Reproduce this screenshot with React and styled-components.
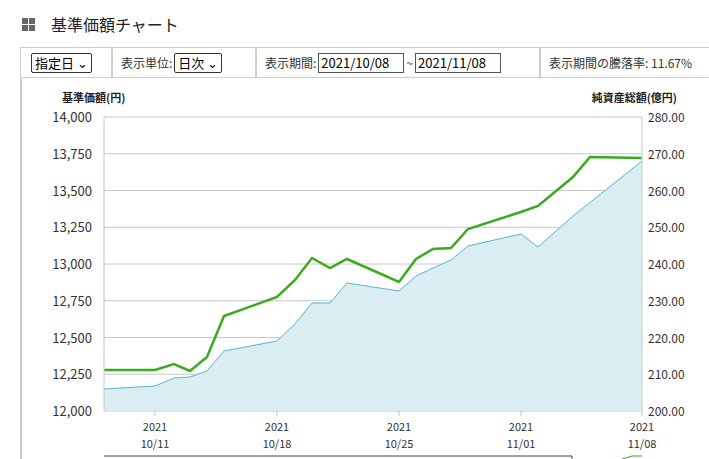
import React from 'react'
import styled, { createGlobalStyle } from 'styled-components'

const Global = createGlobalStyle`
  body { margin: 0; background: #fff; font-family: "Noto Sans CJK JP", "Noto Sans", sans-serif; color: #222; overflow: hidden; }
`

const green = [[104,370],[155,370],[174,364],[190,371],[207,357],[224,316],[277,297],[295,280],[312,258],[330,268],[347,259],[399,282],[416,259],[433,249],[451,248],[468,229],[521,212],[538,206],[573,177],[590,157],[642,158]]
const blue = [[104,389],[155,386],[174,378],[190,377],[207,371],[224,351],[277,341],[295,324],[312,303],[330,303],[347,283],[399,291],[416,276],[433,268],[451,260],[468,246],[521,234],[538,247],[573,216],[642,161]]
const leftTicks = ['14,000','13,750','13,500','13,250','13,000','12,750','12,500','12,250','12,000']
const rightTicks = ['280.00','270.00','260.00','250.00','240.00','230.00','220.00','210.00','200.00']
const dates = [[155,'10/11'],[277,'10/18'],[399,'10/25'],[521,'11/01'],[642,'11/08']]

const Title = () => (
  <Head>
    <svg width="13" height="13" viewBox="0 0 13 13">
      <rect x="0" y="0" width="6" height="6" fill="#666" />
      <rect x="7" y="0" width="6" height="6" fill="#666" />
      <rect x="0" y="7" width="6" height="6" fill="#666" />
      <rect x="7" y="7" width="6" height="6" fill="#666" />
    </svg>
    <span>基準価額チャート</span>
  </Head>
)

const Chart = () => {
  const top = 117, bottom = 411, step = (bottom - top) / 8
  const pts = (a) => a.map(p => `${p[0]},${p[1] - 78}`).join(' ')
  return (
    <svg width="709" height="381" viewBox="0 0 709 381">
      <g fontFamily='"Noto Sans CJK JP", sans-serif' fontSize="12" fill="#222">
        <text x="62" y="24" fontWeight="bold" fontSize="11">基準価額(円)</text>
        <text x="677" y="24" fontWeight="bold" fontSize="11" textAnchor="end">純資産総額(億円)</text>
      </g>
      {leftTicks.map((_, i) => (
        <line key={i} x1="104" x2="642" y1={top - 78 + i * step} y2={top - 78 + i * step} stroke={i === 8 ? '#b8c8d8' : '#c8c8c8'} />
      ))}
      <polygon points={`104,333 ${pts(blue)} 642,333`} fill="#d9edf3" />
      <polyline points={pts(blue)} fill="none" stroke="#5ab4cc" strokeWidth="1" />
      <polyline points={pts(green)} fill="none" stroke="#3aaa1e" strokeWidth="2.5" />
      <line x1="104" x2="104" y1={top - 78} y2="333" stroke="#c8c8c8" />
      <line x1="642" x2="642" y1={top - 78} y2="333" stroke="#c8c8c8" />
      <g fontFamily='"Noto Sans CJK JP", sans-serif' fontSize="13" fill="#333">
        {leftTicks.map((t, i) => (
          <text key={t} x="92" y={top - 78 + i * step + 5} textAnchor="end">{t}</text>
        ))}
        {rightTicks.map((t, i) => (
          <text key={t} x="648" y={top - 78 + i * step + 5} fontSize="12">{t}</text>
        ))}
        {dates.map(([x, d]) => (
          <g key={d}>
            <line x1={x} x2={x} y1="333" y2="338" stroke="#b8c8d8" />
            <text x={x} y="353" textAnchor="middle" fontSize="11">2021</text>
            <text x={x} y="370" textAnchor="middle" fontSize="11">{d}</text>
          </g>
        ))}
      </g>
      <path d="M104 378 H572 V381" fill="none" stroke="#444" />
      <path d="M622 381 L632 378 H642" fill="none" stroke="#3aaa1e" />
    </svg>
  )
}

export default function App() {
  return (
    <>
      <Global />
      <Title />
      <Toolbar>
        <Cell w={92}><Select>指定日 ⌄</Select></Cell>
        <Cell w={144}>表示単位: <Select>日次 ⌄</Select></Cell>
        <Cell w={284}>表示期間: <DateBox>2021/10/08</DateBox>~<DateBox>2021/11/08</DateBox></Cell>
        <Cell w={180}>表示期間の騰落率: 11.67%</Cell>
      </Toolbar>
      <Panel><Chart /></Panel>
    </>
  )
}

const Head = styled.div`
  display: flex;
  align-items: center;
  gap: 16px;
  padding: 14px 0 0 22px;
  height: 20px;
  font-size: 16px;
  color: #222;
`

const Toolbar = styled.div`
  display: flex;
  margin: 13px 0 0 20px;
  height: 29px;
  border: 1px solid #ccc;
  border-right: none;
  font-size: 12px;
`

const Cell = styled.div`
  flex: 0 0 ${p => p.w}px;
  display: flex;
  align-items: center;
  gap: 2px;
  padding-left: 8px;
  box-sizing: border-box;
  border-right: 2px solid #ccc;
  white-space: nowrap;
  color: #333;
  &:first-child { padding-left: 10px; }
`

const Select = styled.span`
  border: 1px solid #333;
  border-radius: 2px;
  padding: 0 3px;
  font-size: 13px;
  line-height: 18px;
  color: #000;
`

const DateBox = styled.span`
  border: 1px solid #555;
  width: 80px;
  padding: 0 2px;
  font-size: 13px;
  line-height: 18px;
  color: #000;
`

const Panel = styled.div`
  margin-left: 20px;
  border-left: 2px solid #ccc;
  height: 381px;
  & > svg { margin-left: -22px; display: block; }
`
